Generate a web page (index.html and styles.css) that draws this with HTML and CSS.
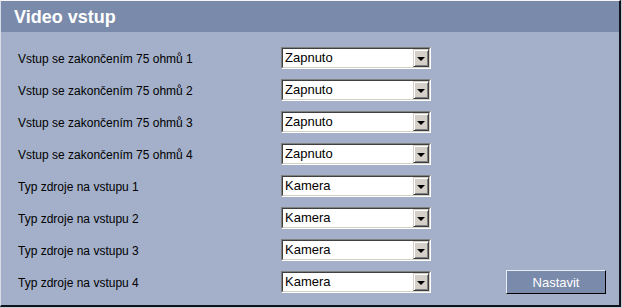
FILE: index.html
```html
<!DOCTYPE html>
<html>
<head>
<meta charset="utf-8">
<link rel="stylesheet" href="styles.css">
</head>
<body>
<div class="frame">
  <div class="panel">
    <div class="header"><h1 class="title">Video vstup</h1></div>
    <div class="content">
      <div class="label">Vstup se zakončením 75 ohmů 1</div>
      <div class="select"><div class="select-inner"><span class="value">Zapnuto</span><span class="btn"><span class="arrow"></span></span></div></div>
      <div class="spacer"></div>
      <div class="label">Vstup se zakončením 75 ohmů 2</div>
      <div class="select"><div class="select-inner"><span class="value">Zapnuto</span><span class="btn"><span class="arrow"></span></span></div></div>
      <div class="spacer"></div>
      <div class="label">Vstup se zakončením 75 ohmů 3</div>
      <div class="select"><div class="select-inner"><span class="value">Zapnuto</span><span class="btn"><span class="arrow"></span></span></div></div>
      <div class="spacer"></div>
      <div class="label">Vstup se zakončením 75 ohmů 4</div>
      <div class="select"><div class="select-inner"><span class="value">Zapnuto</span><span class="btn"><span class="arrow"></span></span></div></div>
      <div class="spacer"></div>
      <div class="label">Typ zdroje na vstupu 1</div>
      <div class="select"><div class="select-inner"><span class="value">Kamera</span><span class="btn"><span class="arrow"></span></span></div></div>
      <div class="spacer"></div>
      <div class="label">Typ zdroje na vstupu 2</div>
      <div class="select"><div class="select-inner"><span class="value">Kamera</span><span class="btn"><span class="arrow"></span></span></div></div>
      <div class="spacer"></div>
      <div class="label">Typ zdroje na vstupu 3</div>
      <div class="select"><div class="select-inner"><span class="value">Kamera</span><span class="btn"><span class="arrow"></span></span></div></div>
      <div class="spacer"></div>
      <div class="label">Typ zdroje na vstupu 4</div>
      <div class="select"><div class="select-inner"><span class="value">Kamera</span><span class="btn"><span class="arrow"></span></span></div></div>
      <div class="action"><button class="submit" type="button">Nastavit</button></div>
    </div>
  </div>
</div>
</body>
</html>
```

FILE: styles.css
```css
html, body {
  margin: 0;
  padding: 0;
  background: #a4b0ca;
}
.frame {
  width: 622px;
  height: 308px;
  box-sizing: border-box;
  border-right: 1px solid #c8cdd8;
  border-bottom: 1px solid #c8cdd8;
  background: #a4b0ca;
}
.panel {
  height: 100%;
  box-sizing: border-box;
  border-top: 1px solid #f4f6fa;
  border-left: 1px solid #d8dde8;
  border-right: 2px solid #10131c;
  border-bottom: 2px solid #10131c;
  display: flex;
  flex-direction: column;
  font-family: "Liberation Sans", Arial, sans-serif;
}
.header {
  height: 31px;
  background: #7a8aab;
  display: flex;
  align-items: center;
  padding-left: 13px;
}
.title {
  margin: 0;
  color: #fff;
  font-size: 18px;
  font-weight: bold;
  line-height: 20px;
  padding-top: 1px;
}
.content {
  flex: 1;
  background: #a4b0ca;
  padding: 15px 0 0 17px;
  display: grid;
  grid-template-columns: 263px 150px 1fr;
  grid-auto-rows: 22px;
  row-gap: 10px;
  align-items: center;
}
.label {
  font-size: 12px;
  color: #000;
  line-height: 14px;
  padding-top: 1px;
}
.select {
  height: 22px;
  box-sizing: border-box;
  border-top: 1px solid #808080;
  border-left: 1px solid #808080;
  border-right: 1px solid #ffffff;
  border-bottom: 1px solid #ffffff;
}
.select-inner {
  height: 100%;
  box-sizing: border-box;
  border-top: 1px solid #404040;
  border-left: 1px solid #404040;
  border-right: 1px solid #d4d0c8;
  border-bottom: 1px solid #d4d0c8;
  background: #fff;
  display: flex;
  align-items: stretch;
}
.value {
  flex: 1;
  font-size: 13px;
  line-height: 18px;
  padding-left: 2px;
  color: #000;
}
.btn {
  width: 16px;
  box-sizing: border-box;
  background: #d4d0c8;
  border-top: 1px solid #d4d0c8;
  border-left: 1px solid #d4d0c8;
  border-right: 1px solid #404040;
  border-bottom: 1px solid #404040;
  box-shadow: inset 1px 1px 0 #ffffff, inset -1px -1px 0 #808080;
  display: flex;
  align-items: center;
  justify-content: center;
}
.arrow {
  width: 0;
  height: 0;
  border-left: 4px solid transparent;
  border-right: 4px solid transparent;
  border-top: 4px solid #000;
  margin-top: 1px;
}
.action {
  display: flex;
  justify-content: flex-end;
  padding-right: 13px;
}
.submit {
  width: 100px;
  height: 24px;
  box-sizing: border-box;
  background: #7a8aab;
  color: #fff;
  font-family: "Liberation Sans", Arial, sans-serif;
  font-size: 13px;
  border-top: 1px solid #e8ecf4;
  border-left: 1px solid #e8ecf4;
  border-right: 1px solid #000;
  border-bottom: 1px solid #000;
  padding: 0;
  margin: 0;
}
```
